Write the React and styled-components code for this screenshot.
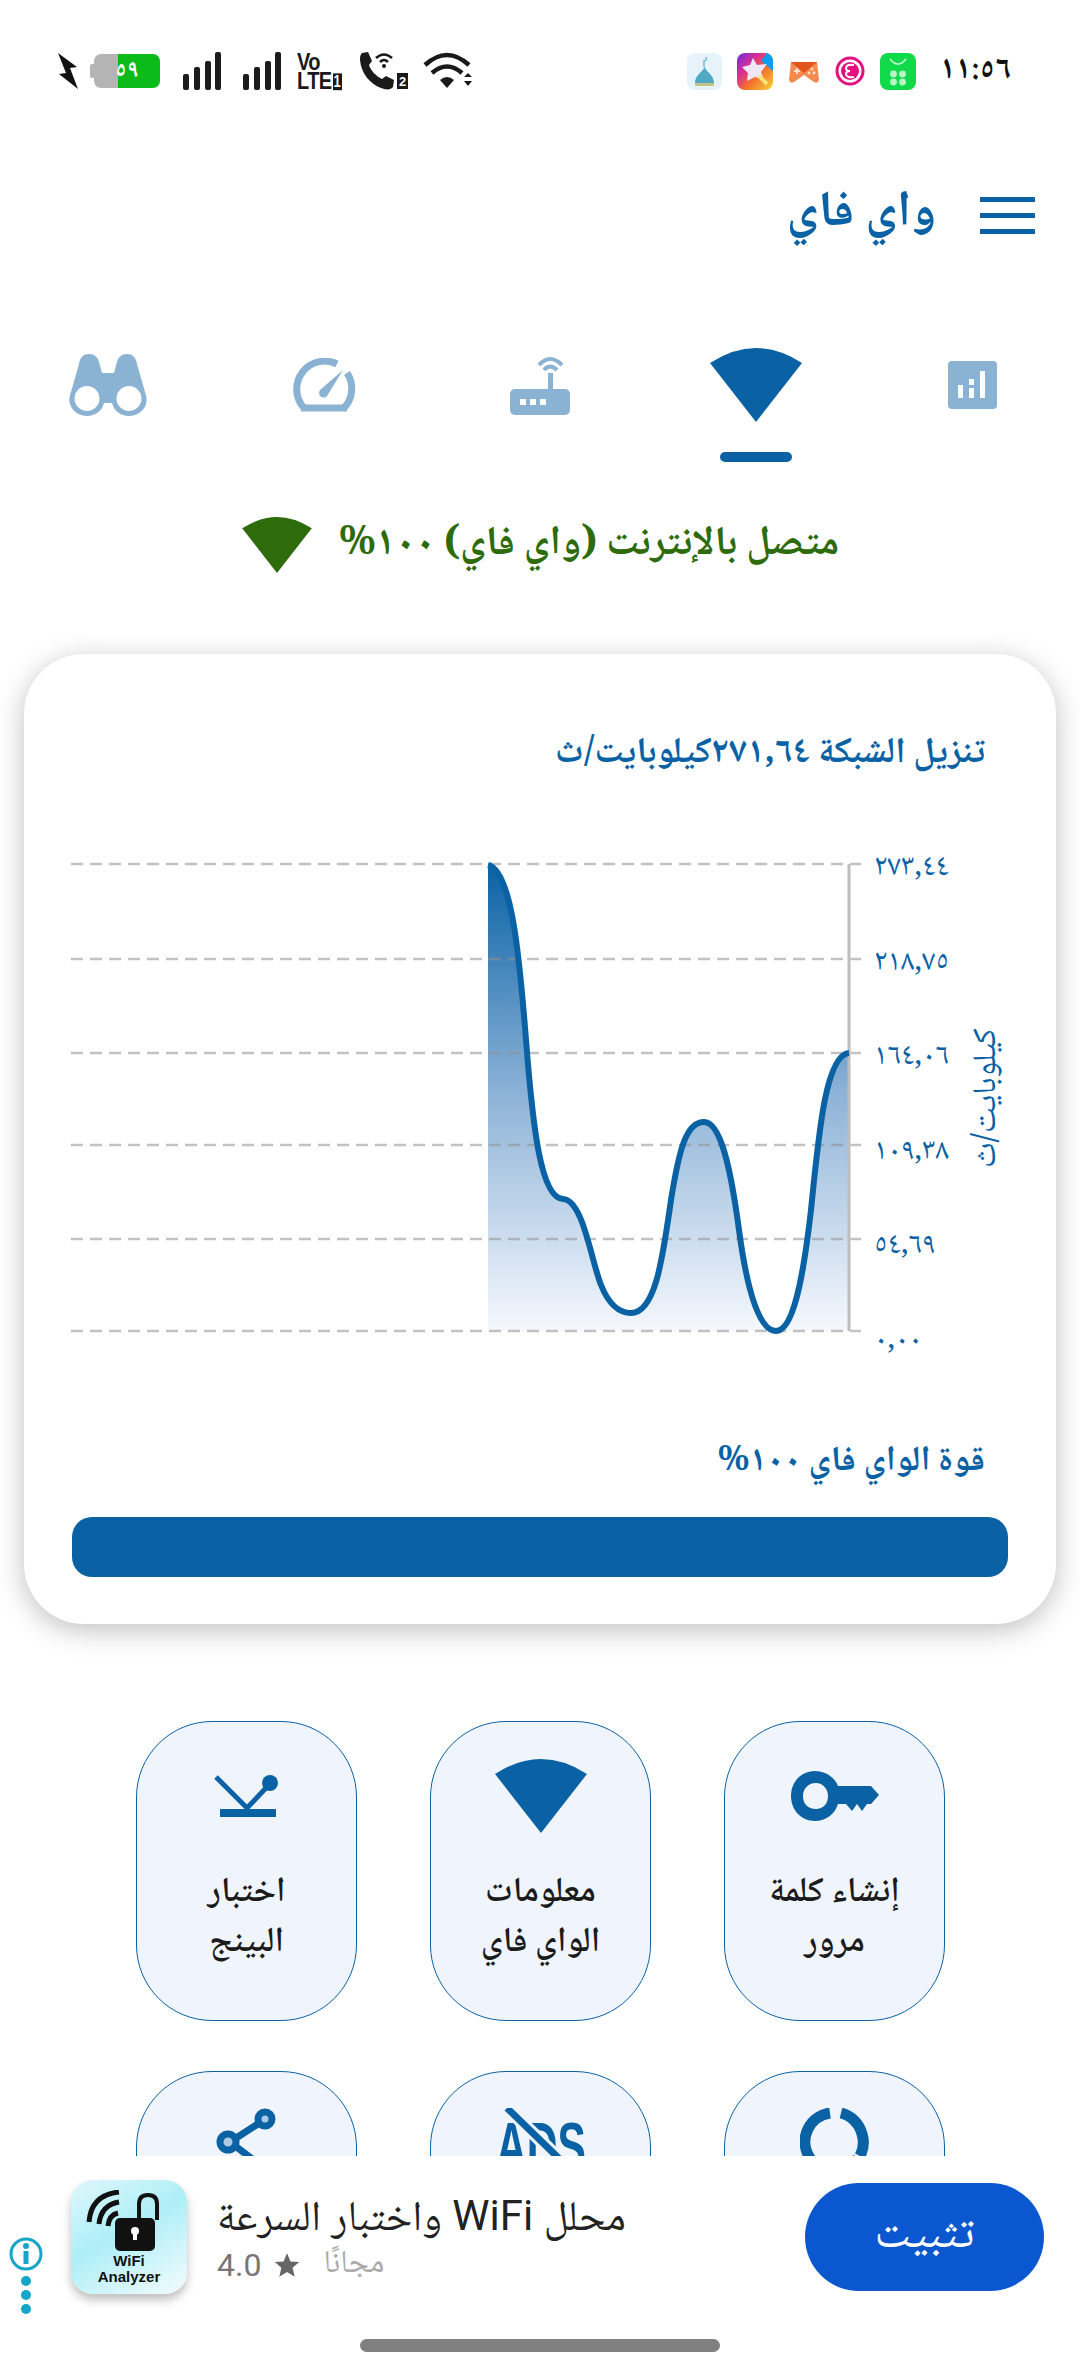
import React from "react";
import styled, { createGlobalStyle } from "styled-components";

const BLUE = "#0a62a5";
const PALE = "#8ab2d3";
const FONT = `"Noto Naskh Arabic", "Noto Sans Arabic", "DejaVu Sans", sans-serif`;

const GlobalStyle = createGlobalStyle`
  html, body { margin: 0; padding: 0; background: #fff; }
  * { box-sizing: border-box; }
  body { font-family: ${FONT}; }
`;

const Page = styled.div`
  width: 1080px;
  height: 2372px;
  overflow: hidden;
  display: flex;
  flex-direction: column;
  background: #fff;
`;

const Main = styled.div`
  height: 2156px;
  overflow: hidden;
  flex-shrink: 0;
`;

// status bar
const StatusBar = styled.div`
  height: 148px;
  padding: 51px 69px 0 57px;
  display: flex;
  justify-content: space-between;
  align-items: flex-start;
  direction: ltr;
`;

const StatusGroup = styled.div`
  display: flex;
  align-items: center;
  gap: ${(p) => p.$gap || 14}px;
  height: 40px;
`;

const Battery = styled.div`
  width: 66px;
  height: 34px;
  margin: 0 9px 0 1px;
  border-radius: 7px;
  background: linear-gradient(90deg, #b4b4b4 0 37%, #0abb1a 37% 100%);
  position: relative;
  display: flex;
  align-items: center;
  justify-content: center;
  color: #fff;
  font-size: 24px;
  font-weight: 700;
  &::before {
    content: "";
    position: absolute;
    left: -4px;
    top: 10px;
    width: 4px;
    height: 14px;
    background: #b4b4b4;
    border-radius: 2px 0 0 2px;
  }
`;

const Volte = styled.div`
  width: 48px;
  margin-left: 2px;
  font-family: "Liberation Sans", sans-serif;
  font-weight: 700;
  font-size: 20px;
  line-height: 16px;
  color: #1a1a1a;
  letter-spacing: -0.6px;
  white-space: nowrap;
  transform: scaleY(1.2);
`;

const VolteSim = styled.span`
  display: inline-block;
  margin-left: 1px;
  padding: 0 1px;
  height: 14px;
  line-height: 14px;
  font-size: 13px;
  letter-spacing: 0;
  vertical-align: top;
  margin-top: 2px;
  background: #1a1a1a;
  color: #fff;
`;

const Clock = styled.div`
  font-size: 32px;
  font-weight: 700;
  color: #111;
  margin-left: 9px;
  line-height: 34px;
`;

// header
const Header = styled.div`
  height: 134px;
  padding: 0 45px;
  display: flex;
  align-items: center;
  gap: 44px;
`;

const Burger = styled.div`
  width: 55px;
  height: 37px;
  display: flex;
  flex-direction: column;
  justify-content: space-between;
  & > span {
    display: block;
    height: 5px;
    background: ${BLUE};
  }
`;

const Title = styled.h1`
  margin: 0;
  font-size: 50px;
  font-weight: 700;
  line-height: 70px;
  color: ${BLUE};
`;

// tabs
const TabRow = styled.div`
  padding-top: 66px;
  display: flex;
`;

const Tab = styled.div`
  flex: 1;
  display: flex;
  flex-direction: column;
  align-items: center;
`;

const TabIcon = styled.div`
  height: 74px;
  display: flex;
  align-items: center;
  justify-content: center;
`;

const TabMark = styled.div`
  width: 72px;
  height: 10px;
  margin-top: 30px;
  border-radius: 5px;
  background: ${(p) => (p.$on ? BLUE : "transparent")};
`;

const Connection = styled.div`
  margin-top: 53px;
  height: 60px;
  display: flex;
  align-items: center;
  justify-content: center;
  gap: 26px;
  color: #2e6b0a;
  font-size: 40.5px;
  font-weight: 700;
  white-space: nowrap;
`;

// card
const Card = styled.section`
  margin: 79px 24px 0;
  height: 970px;
  padding: 81px 48px 0;
  background: #fff;
  border-radius: 60px;
  box-shadow: 0 6px 28px rgba(0, 0, 0, 0.25);
`;

const CardTitle = styled.div`
  height: 40px;
  line-height: 40px;
  padding: 0 23px;
  margin-top: ${(p) => p.$top || 0}px;
  color: ${BLUE};
  font-size: ${(p) => p.$size || 35}px;
  font-weight: 700;
  white-space: nowrap;
`;

const ChartRow = styled.div`
  direction: ltr;
  display: flex;
  margin-top: 85px;
  height: 476px;
  margin-left: -1px;
`;

const AxisLabels = styled.div`
  width: 94px;
  margin-left: 3px;
  height: 503px;
  margin-top: -6px;
  display: flex;
  flex-direction: column;
  justify-content: space-between;
  color: ${BLUE};
  font-size: 30px;
  line-height: 30px;
  flex-shrink: 0;
`;

const AxisUnit = styled.div`
  flex: 1;
  display: flex;
  align-items: center;
  justify-content: center;
  writing-mode: vertical-rl;
  transform: rotate(180deg);
  color: ${BLUE};
  font-size: 33px;
  line-height: 40px;
  direction: rtl;
  white-space: nowrap;
`;

const StrengthBar = styled.div`
  margin-top: 34px;
  height: 60px;
  border-radius: 20px;
  background: ${BLUE};
`;

// tile grid
const Grid = styled.div`
  margin: 97px 135px 0 136px;
  display: grid;
  grid-template-columns: repeat(3, 221px);
  justify-content: space-between;
  row-gap: 50px;
`;

const Tile = styled.div`
  height: 300px;
  padding-top: 36px;
  background: #f0f5fd;
  border: 1px solid ${BLUE};
  border-radius: 76px;
  display: flex;
  flex-direction: column;
  align-items: center;
`;

const TileIcon = styled.div`
  height: 76px;
  display: flex;
  align-items: ${(p) => (p.$top ? "flex-start" : "center")};
  justify-content: center;
`;

const TileLabel = styled.div`
  margin-top: 35px;
  font-size: 35px;
  font-weight: 600;
  line-height: 50px;
  color: #1b1b1b;
  text-align: center;
  white-space: nowrap;
`;

// ad strip
const AdBar = styled.div`
  flex: 1;
  position: relative;
  display: flex;
  align-items: flex-start;
  direction: ltr;
  padding: 24px 36px 0 71px;
  background: #fff;
`;

const AdSide = styled.div`
  position: absolute;
  left: 8px;
  top: 80px;
  display: flex;
  flex-direction: column;
  align-items: center;
  gap: 3px;
`;

const AdIcon = styled.div`
  width: 116px;
  height: 114px;
  border-radius: 22px;
  background: linear-gradient(150deg, #dff8fb 0%, #aeeef7 45%, #f3fcfd 100%);
  box-shadow: 0 6px 10px rgba(0, 0, 0, 0.25);
  display: flex;
  flex-direction: column;
  align-items: center;
  padding-top: 10px;
  flex-shrink: 0;
`;

const AdIconText = styled.div`
  font-family: "Liberation Sans", sans-serif;
  font-weight: 700;
  font-size: 15px;
  line-height: 16px;
  color: #111;
  text-align: center;
  margin-top: 1px;
`;

const AdInfo = styled.div`
  margin-left: 30px;
  flex: 1;
  display: flex;
  flex-direction: column;
  align-items: flex-start;
`;

const AdTitle = styled.div`
  direction: rtl;
  font-family: "Roboto", ${FONT};
  font-size: 42px;
  line-height: 50px;
  margin-top: 11px;
  color: #222;
  white-space: nowrap;
`;

const AdMeta = styled.div`
  display: flex;
  align-items: center;
  gap: 12px;
  margin-top: 6px;
  font-family: "Roboto", sans-serif;
  font-size: 32px;
  line-height: 36px;
  color: #777;
`;

const AdFree = styled.span`
  font-family: ${FONT};
  font-size: 32px;
  color: #aaa;
  margin-left: 10px;
`;

const InstallButton = styled.div`
  width: 239px;
  height: 108px;
  margin-top: 3px;
  border-radius: 54px;
  background: #0b57cf;
  color: #fff;
  font-size: 46px;
  display: flex;
  align-items: center;
  justify-content: center;
`;

const HomeBar = styled.div`
  position: absolute;
  left: 360px;
  bottom: 20px;
  width: 360px;
  height: 13px;
  border-radius: 7px;
  background: #808080;
`;

const Wedge = ({ w = 92, h = 74, color = BLUE }) => (
  <svg width={w} height={h} viewBox="0 0 92 74">
    <path d="M46 74 L0 15 Q46 -15 92 15 Z" fill={color} />
  </svg>
);

const Bars = () => (
  <svg width="38" height="38" viewBox="0 0 38 38" fill="#1c1c1c">
    <rect x="0" y="22" width="6" height="16" rx="2" />
    <rect x="11" y="15" width="6" height="23" rx="2" />
    <rect x="22" y="9" width="6" height="29" rx="2" />
    <rect x="32" y="0" width="6" height="38" rx="2" />
  </svg>
);

const Binoculars = () => (
  <svg width="78" height="62" viewBox="0 0 78 62">
    <path
      fillRule="evenodd"
      fill={PALE}
      d="M10 10 C11 3 15 0 20 0 C25 0 29 3 30 8 L33 19 L45 19 L48 8 C49 3 53 0 58 0 C63 0 67 3 68 10 L76 38 C78 44 78 47 77 50 C75 57 68 62 60 62 C52 62 45 57 43 49 L35 49 C33 57 26 62 18 62 C10 62 3 57 1 50 C0 47 0 44 2 38 Z M18 32 A12.5 12.5 0 1 0 18 57 A12.5 12.5 0 1 0 18 32 Z M60 32 A12.5 12.5 0 1 0 60 57 A12.5 12.5 0 1 0 60 32 Z"
    />
  </svg>
);

const Gauge = () => (
  <svg width="66" height="54" viewBox="0 0 66 54">
    <path d="M13 50 A28 28 0 0 1 46 6" fill="none" stroke={PALE} strokeWidth="7" />
    <path d="M56 15 A28 28 0 0 1 53 50" fill="none" stroke={PALE} strokeWidth="7" />
    <path d="M10 50 H56" stroke={PALE} strokeWidth="7" />
    <path d="M52 12 L36 38 C32 42 26 38 29 32 Z" fill={PALE} />
  </svg>
);

const Router = () => (
  <svg width="60" height="60" viewBox="0 0 60 60">
    <rect x="0" y="34" width="60" height="26" rx="5" fill={PALE} />
    <rect x="38" y="18" width="5" height="18" fill={PALE} />
    <path d="M29 10 Q40 -2 52 10 M34 15 Q40 8 47 15" fill="none" stroke={PALE} strokeWidth="4" />
    <rect x="10" y="44" width="6" height="6" fill="#fff" />
    <rect x="20" y="44" width="6" height="6" fill="#fff" />
    <rect x="30" y="44" width="6" height="6" fill="#fff" />
  </svg>
);

const SignalBox = () => (
  <svg width="49" height="48" viewBox="0 0 49 48">
    <rect width="49" height="48" rx="4" fill={PALE} />
    <rect x="10" y="24" width="5" height="13" fill="#fff" />
    <rect x="21" y="18" width="5" height="6" fill="#fff" />
    <rect x="21" y="27" width="5" height="10" fill="#fff" />
    <rect x="32" y="10" width="5" height="27" fill="#fff" />
  </svg>
);

const Bolt = () => (
  <svg width="22" height="36" viewBox="0 0 22 36">
    <path d="M1 0 L20 14 L13 15 L21 36 L2 21 L9 20 Z" fill="#111" />
  </svg>
);

const CallIcon = () => (
  <svg width="50" height="38" viewBox="0 0 50 38">
    <path d="M3 1 L9 0 L13 9 L10 13 C12 19 17 24 23 27 L27 24 L35 28 L34 35 C32 38 27 38 22 36 C11 32 2 21 1 8 C1 5 1 3 3 1 Z" fill="#1a1a1a" />
    <path d="M17 6 Q25 -1 33 6 M21 10 Q25 6 29 10" fill="none" stroke="#1a1a1a" strokeWidth="2.5" />
    <circle cx="25" cy="14" r="2" fill="#1a1a1a" />
    <rect x="38" y="21" width="11" height="16" fill="#1a1a1a" />
    <text x="43.5" y="34" textAnchor="middle" fontSize="13" fontWeight="700" fill="#fff" fontFamily="Liberation Sans">2</text>
  </svg>
);

const WifiStatus = () => (
  <svg width="50" height="38" viewBox="0 0 50 38">
    <path d="M2 13 Q24 -7 46 13 M9 21 Q24 8 39 21" fill="none" stroke="#1a1a1a" strokeWidth="4.5" />
    <path d="M17 28 Q24 22 31 28 L24 36 Z" fill="#1a1a1a" />
    <path d="M41 25 L45 21 L49 25 Z M41 29 L49 29 L45 34 Z" fill="#1a1a1a" />
  </svg>
);

const Mosque = () => (
  <svg width="35" height="37" viewBox="0 0 35 37">
    <rect width="35" height="37" rx="8" fill="#e6f3fb" />
    <path d="M8 30 C8 22 15 20 17.5 14 C20 20 27 22 27 30 Z" fill="#4fa9c4" />
    <rect x="8" y="30" width="19" height="3" fill="#c5c48a" />
    <path d="M17 14 V8 Q20 8 19 4" fill="none" stroke="#6cbcd6" strokeWidth="1.5" />
  </svg>
);

const StarApp = () => (
  <svg width="36" height="37" viewBox="0 0 36 37">
    <defs>
      <linearGradient id="starBg" x1="0" y1="0" x2="1" y2="1">
        <stop offset="0" stopColor="#6a2be4" />
        <stop offset="0.35" stopColor="#e0308c" />
        <stop offset="0.6" stopColor="#f4722a" />
        <stop offset="1" stopColor="#f6d33a" />
      </linearGradient>
    </defs>
    <rect width="36" height="37" rx="8" fill="url(#starBg)" />
    <path d="M30 0 H28 A8 8 0 0 1 36 8 V18 L24 8 Z" fill="#0c9cf5" />
    <path d="M16 5 L20 12 L30 11 L24 19 L27 27 L18 24 L10 28 L11 20 L5 14 L13 12 Z" fill="#efe6f6" />
    <path d="M22 23 L30 31" stroke="#f8e27a" strokeWidth="4" />
  </svg>
);

const GameApp = () => (
  <svg width="32" height="37" viewBox="0 0 32 37">
    <path d="M3 9 H29 L31 27 Q30 31 26 29 L16 22 L6 29 Q2 31 1 27 Z" fill="#f58a4f" />
    <path d="M3 9 H29 L16 20 Z" fill="#e2531d" />
    <path d="M6 18 H12 M9 15 V21" stroke="#ffe3cf" strokeWidth="2" />
    <circle cx="24" cy="16" r="1.4" fill="#ffe3cf" />
    <circle cx="21" cy="20" r="1.4" fill="#ffe3cf" />
    <circle cx="26" cy="20" r="1.4" fill="#ffe3cf" />
  </svg>
);

const CoinApp = () => (
  <svg width="30" height="37" viewBox="0 0 30 37">
    <circle cx="15" cy="18" r="13" fill="#fff" stroke="#e5107f" strokeWidth="3" />
    <circle cx="15" cy="18" r="9" fill="#e5107f" />
    <path d="M19 12 Q11 11 11 15 Q11 18 15 18 Q11 18 11 21 Q11 25 19 24" fill="none" stroke="#fff" strokeWidth="2" />
  </svg>
);

const StoreApp = () => (
  <svg width="36" height="37" viewBox="0 0 36 37">
    <rect width="36" height="37" rx="8" fill="#10d94a" />
    <path d="M10 6 Q18 16 26 6" fill="none" stroke="#c8f8d4" strokeWidth="1.5" />
    <circle cx="13.5" cy="21" r="3.4" fill="#b9f5c7" />
    <circle cx="22.5" cy="21" r="3.4" fill="#b9f5c7" />
    <circle cx="13.5" cy="29" r="3.4" fill="#b9f5c7" />
    <circle cx="22.5" cy="29" r="3.4" fill="#b9f5c7" />
  </svg>
);

const Key = () => (
  <svg width="88" height="50" viewBox="0 0 88 50">
    <path
      fillRule="evenodd"
      fill={BLUE}
      d="M24 0 C35 0 44 7 47 15 L80 15 L88 24 L80 33 L76 33 L71 40 L66 33 L61 40 L55 33 L47 33 C44 43 35 50 24 50 C10 50 0 39 0 25 C0 11 10 0 24 0 Z M25 12 C17 12 12 18 12 25 C12 33 17 38 25 38 C32 38 37 33 37 25 C37 18 32 12 25 12 Z"
    />
  </svg>
);

const Ping = () => (
  <svg width="66" height="42" viewBox="0 0 66 42">
    <path d="M2 2 L33 33 L52 13" fill="none" stroke={BLUE} strokeWidth="5" />
    <circle cx="56" cy="8" r="8" fill={BLUE} />
    <rect x="6" y="34" width="56" height="8" fill={BLUE} />
  </svg>
);

const Share = () => (
  <svg width="62" height="100" viewBox="0 0 62 100">
    <g fill="#aec9e4" stroke={BLUE} strokeWidth="7">
      <path d="M14 34 L48 12 M14 34 L48 60" fill="none" />
      <circle cx="49" cy="11" r="7" />
      <circle cx="12" cy="34" r="8" />
      <circle cx="49" cy="60" r="7" />
    </g>
  </svg>
);

const NoAds = () => (
  <svg width="92" height="100" viewBox="0 0 92 100">
    <text x="46" y="61" textAnchor="middle" fontSize="66" fontWeight="700" fill={BLUE} fontFamily="Liberation Sans" textLength="90" lengthAdjust="spacingAndGlyphs">ADS</text>
    <path d="M12 0 L82 68" stroke="#f0f5fd" strokeWidth="13" />
    <path d="M12 0 L82 68" stroke={BLUE} strokeWidth="7" />
  </svg>
);

const Ring = () => (
  <svg width="70" height="100" viewBox="0 0 70 100">
    <path d="M30 5 A29 29 0 1 0 58 50" fill="none" stroke={BLUE} strokeWidth="11" />
    <path d="M41 5 A29 29 0 0 1 62 26 A29 29 0 0 1 60 48" fill="none" stroke={BLUE} strokeWidth="11" />
  </svg>
);

const CURVE =
  "M417 5 C440 10 448 90 455 180 C462 270 470 338 492 339 C512 340 520 400 530 425 C538 445 548 453 560 453 C585 453 592 395 600 340 C608 290 615 262 633 262 C650 262 660 310 668 370 C676 430 688 471 705 471 C722 471 732 420 740 350 C748 270 755 195 778 193";

const GRID_LINES = [4, 99, 193, 285, 379, 471];

const SpeedChart = () => (
  <svg width="800" height="476" viewBox="0 0 800 476" style={{ flexShrink: 0 }}>
    <defs>
      <linearGradient id="areaFill" x1="0" y1="0" x2="0" y2="1">
        <stop offset="0" stopColor={BLUE} />
        <stop offset="0.5" stopColor="#8fb4d8" />
        <stop offset="1" stopColor="#f5f8fd" />
      </linearGradient>
    </defs>
    <path d={`${CURVE} L778 471 L417 471 Z`} fill="url(#areaFill)" />
    {GRID_LINES.map((y) => (
      <line key={y} x1="0" x2="790" y1={y} y2={y} stroke="#8f8f8f" strokeOpacity="0.55" strokeWidth="2.5" strokeDasharray="12 7" />
    ))}
    <line x1="778" x2="778" y1="4" y2="471" stroke="#bdbdbd" strokeWidth="3" />
    <path d={CURVE} fill="none" stroke={BLUE} strokeWidth="6" />
  </svg>
);

const TABS = [
  { icon: <SignalBox /> },
  { icon: <Wedge />, on: true },
  { icon: <Router /> },
  { icon: <Gauge /> },
  { icon: <Binoculars /> },
];

const TILES = [
  { icon: <Key />, lines: ["إنشاء كلمة", "مرور"] },
  { icon: <Wedge />, lines: ["معلومات", "الواي فاي"] },
  { icon: <Ping />, lines: ["اختبار", "البينج"] },
  { icon: <Ring />, lines: [], top: true },
  { icon: <NoAds />, lines: [], top: true },
  { icon: <Share />, lines: [], top: true },
];

const AXIS = ["٢٧٣,٤٤", "٢١٨,٧٥", "١٦٤,٠٦", "١٠٩,٣٨", "٥٤,٦٩", "٠,٠٠"];

export default function App() {
  return (
    <Page>
      <GlobalStyle />
      <Main>
        <StatusBar>
          <StatusGroup>
            <Bolt />
            <Battery>٥٩</Battery>
            <StatusGroup $gap={22}>
              <Bars />
              <Bars />
            </StatusGroup>
            <Volte>
              Vo
              <br />
              LTE<VolteSim>1</VolteSim>
            </Volte>
            <CallIcon />
            <WifiStatus />
          </StatusGroup>
          <StatusGroup $gap={15}>
            <Mosque />
            <StarApp />
            <GameApp />
            <CoinApp />
            <StoreApp />
            <Clock>١١:٥٦</Clock>
          </StatusGroup>
        </StatusBar>

        <div dir="rtl">
          <Header>
            <Burger>
              <span />
              <span />
              <span />
            </Burger>
            <Title>واي فاي</Title>
          </Header>

          <TabRow>
            {TABS.map((tab, i) => (
              <Tab key={i}>
                <TabIcon>{tab.icon}</TabIcon>
                <TabMark $on={tab.on} />
              </Tab>
            ))}
          </TabRow>

          <Connection>
            <span>متصل بالإنترنت (واي فاي) ١٠٠%</span>
            <Wedge w={72} h={56} color="#2e6b0a" />
          </Connection>

          <Card>
            <CardTitle $size={36}>تنزيل الشبكة ٢٧١,٦٤كيلوبايت/ث</CardTitle>
            <ChartRow>
              <SpeedChart />
              <AxisLabels>
                {AXIS.map((label) => (
                  <span key={label}>{label}</span>
                ))}
              </AxisLabels>
              <AxisUnit>كيلوبايت/ث</AxisUnit>
            </ChartRow>
            <CardTitle $top={107}>قوة الواي فاي ١٠٠%</CardTitle>
            <StrengthBar />
          </Card>

          <Grid>
            {TILES.map((tile, i) => (
              <Tile key={i}>
                <TileIcon $top={tile.top}>{tile.icon}</TileIcon>
                <TileLabel>
                  {tile.lines.map((line) => (
                    <div key={line}>{line}</div>
                  ))}
                </TileLabel>
              </Tile>
            ))}
          </Grid>
        </div>
      </Main>

      <AdBar>
        <AdSide>
          <svg width="36" height="36" viewBox="0 0 36 36">
            <circle cx="18" cy="18" r="15" fill="none" stroke="#14a5c8" strokeWidth="3" />
            <rect x="15.5" y="15" width="5" height="13" fill="#14a5c8" />
            <circle cx="18" cy="10" r="3" fill="#14a5c8" />
          </svg>
          <svg width="12" height="44" viewBox="0 0 12 44" fill="#14a5c8">
            <circle cx="6" cy="6" r="5" />
            <circle cx="6" cy="20" r="5" />
            <circle cx="6" cy="34" r="5" />
          </svg>
        </AdSide>
        <AdIcon>
          <svg width="92" height="62" viewBox="0 0 92 62">
            <path d="M6 32 Q8 5 36 2 M16 34 Q18 15 36 12 M25 36 Q26 25 35 23" fill="none" stroke="#111" strokeWidth="5" />
            <path d="M56 30 V14 Q56 5 65 5 Q74 5 74 14 V30" fill="none" stroke="#111" strokeWidth="4" />
            <rect x="32" y="28" width="40" height="33" rx="5" fill="#111" />
            <circle cx="52" cy="41" r="4" fill="#fff" />
            <rect x="50" y="42" width="4" height="8" fill="#fff" />
          </svg>
          <AdIconText>
            WiFi
            <br />
            Analyzer
          </AdIconText>
        </AdIcon>
        <AdInfo>
          <AdTitle>محلل WiFi واختبار السرعة</AdTitle>
          <AdMeta>
            4.0
            <svg width="28" height="28" viewBox="0 0 24 24" fill="#666">
              <path d="M12 2 L15 9 L22.5 9.5 L16.8 14.4 L18.6 22 L12 18 L5.4 22 L7.2 14.4 L1.5 9.5 L9 9 Z" />
            </svg>
            <AdFree>مجانًا</AdFree>
          </AdMeta>
        </AdInfo>
        <InstallButton>تثبيت</InstallButton>
        <HomeBar />
      </AdBar>
    </Page>
  );
}
